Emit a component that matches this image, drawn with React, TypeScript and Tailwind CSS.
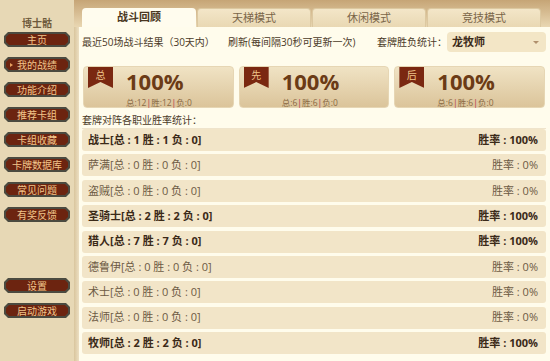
import React from "react";

const font = "font-['Open_Sans','Noto_Sans_CJK_SC',sans-serif]";

const navTop = ["主页", "我的战绩", "功能介绍", "推荐卡组", "卡组收藏", "卡牌数据库", "常见问题", "有奖反馈"];
const navBottom = ["设置", "启动游戏"];
const tabs = ["战斗回顾", "天梯模式", "休闲模式", "竞技模式"];

const stats = [
  { tag: "总", total: 12, win: 12, lose: 0 },
  { tag: "先", total: 6, win: 6, lose: 0 },
  { tag: "后", total: 6, win: 6, lose: 0 },
];

const classes = [
  { name: "战士", total: 1, win: 1, lose: 0, rate: "100%" },
  { name: "萨满", total: 0, win: 0, lose: 0, rate: "0%" },
  { name: "盗贼", total: 0, win: 0, lose: 0, rate: "0%" },
  { name: "圣骑士", total: 2, win: 2, lose: 0, rate: "100%" },
  { name: "猎人", total: 7, win: 7, lose: 0, rate: "100%" },
  { name: "德鲁伊", total: 0, win: 0, lose: 0, rate: "0%" },
  { name: "术士", total: 0, win: 0, lose: 0, rate: "0%" },
  { name: "法师", total: 0, win: 0, lose: 0, rate: "0%" },
  { name: "牧师", total: 2, win: 2, lose: 0, rate: "100%" },
];

const NavButton: React.FC<{ label: string; active?: boolean }> = ({ label, active }) => (
  <div className="w-[66px] h-[15px] bg-[#4b4a40] p-[2px] [clip-path:polygon(4px_0,calc(100%-4px)_0,100%_4px,100%_calc(100%-4px),calc(100%-4px)_100%,4px_100%,0_calc(100%-4px),0_4px)]">
    <div className="relative h-full bg-[#6c2410] flex items-center justify-center text-[10px] leading-none text-[#f2c58a] [clip-path:polygon(3px_0,calc(100%-3px)_0,100%_3px,100%_calc(100%-3px),calc(100%-3px)_100%,3px_100%,0_calc(100%-3px),0_3px)]">
      {active && <span className="absolute left-[4px] top-[4px] w-0 h-0 border-y-[2px] border-y-transparent border-l-[3px] border-l-[#e8a060]" />}
      {label}
    </div>
  </div>
);

const Sidebar: React.FC = () => (
  <div className="w-[74px] shrink-0 bg-[#e7d8b5] flex flex-col pl-[4px]">
    <div className="mt-[16px] w-[66px] h-[14px] text-center text-[10px] leading-[14px] font-bold text-[#6e5a3c]">博士骷</div>
    <div className="mt-[2px] flex flex-col gap-[10px]">
      {navTop.map((n) => (
        <NavButton key={n} label={n} active={n === "我的战绩"} />
      ))}
    </div>
    <div className="mt-[56px] flex flex-col gap-[10px]">
      {navBottom.map((n) => (
        <NavButton key={n} label={n} />
      ))}
    </div>
  </div>
);

const Ribbon: React.FC<{ tag: string }> = ({ tag }) => (
  <div className="w-[25px] h-[21px] shrink-0 bg-[#7a2811] flex justify-center pt-[2px] text-[10px] leading-[12px] text-[#f0c58a] [clip-path:polygon(0_0,100%_0,100%_100%,50%_72%,0_100%)]">
    {tag}
  </div>
);

const StatCard: React.FC<(typeof stats)[number]> = ({ tag, total, win, lose }) => (
  <div className="flex-1 h-[42px] rounded-[4px] bg-gradient-to-b from-[#f0e3c4] to-[#dbc49a] border border-[#e6d6b4] flex pl-[4px]">
    <Ribbon tag={tag} />
    <div className="ml-[13px] flex flex-col">
      <div className="mt-[3px] text-[22px] leading-[22px] font-bold text-[#6b3b16]">100%</div>
      <div className="mt-[6px] text-[8.5px] leading-[10px] whitespace-nowrap text-[#8a6a44]">
        总:{total}<span className="text-[#b0304a]">|</span>胜:{win}
        <span className="text-[#b0304a]">|</span>负:{lose}
      </div>
    </div>
  </div>
);

export default function App() {
  return (
    <div className={`w-[550px] h-[361px] overflow-hidden flex bg-[#e7d8b5] ${font}`}>
      <Sidebar />
      <div className="flex-1 flex flex-col min-w-0">
        <div className="h-[27px] shrink-0 bg-gradient-to-b from-[#c6a576] to-[#e9d7b2] flex items-end pl-[8px] gap-[1px]">
          {tabs.map((t, i) => (
            <div
              key={t}
              className={
                i === 0
                  ? "w-[114px] h-[19px] rounded-t-[4px] bg-[#fffcee] flex items-center justify-center text-[11px] font-bold text-[#4a3722]"
                  : "w-[114px] h-[19px] rounded-t-[4px] bg-gradient-to-b from-[#f3e6c8] to-[#e9d8b3] border border-b-0 border-[#dcc8a0] flex items-center justify-center text-[11px] text-[#7a6548]"
              }
            >
              {t}
            </div>
          ))}
        </div>
        <div className="flex-1 flex min-h-0">
          <div className="w-[5px] shrink-0 bg-gradient-to-r from-[#d9c59d] to-[#ecdfc2]" />
          <div className="flex-1 bg-[#fffcec] pl-[3px] pr-[4px] pt-[5px] flex flex-col">
            <div className="h-[20px] flex items-center text-[10px] whitespace-nowrap text-[#4b3a28]">
              <span className="w-[146px]">最近50场战斗结果（30天内）</span>
              <span className="w-[149px]">刷新(每间隔30秒可更新一次)</span>
              <span className="w-[70px]">套牌胜负统计：</span>
              <div className="w-[99px] h-[20px] rounded-[4px] bg-[#f3e6c6] flex items-center justify-between pl-[5px] pr-[7px]">
                <span className="font-bold text-[11px] text-[#3b2a18]">龙牧师</span>
                <span className="w-0 h-0 border-x-[3px] border-x-transparent border-t-[3px] border-t-[#b0906c]" />
              </div>
            </div>
            <div className="mt-[14px] flex gap-[5px] pl-[1px] pr-[1px]">
              {stats.map((s) => (
                <StatCard key={s.tag} {...s} />
              ))}
            </div>
            <div className="mt-[5px] h-[15px] leading-[15px] text-[10px] text-[#4b3a28]">套牌对阵各职业胜率统计：</div>
            <div className="border-t border-[#efe4cc] flex flex-col gap-[3.4px]">
              {classes.map((c) => {
                const strong = c.total > 0;
                return (
                  <div
                    key={c.name}
                    className={`h-[22px] shrink-0 rounded-[3px] bg-[#f2e5c8] flex items-center justify-between pl-[6px] pr-[8px] text-[11px] ${
                      strong ? "font-bold text-[#3b2a18]" : "text-[#6d5a44]"
                    }`}
                  >
                    <span>
                      {c.name}[总 : {c.total} 胜 : {c.win} 负 : {c.lose}]
                    </span>
                    <span>胜率 : {c.rate}</span>
                  </div>
                );
              })}
            </div>
          </div>
        </div>
      </div>
    </div>
  );
}
